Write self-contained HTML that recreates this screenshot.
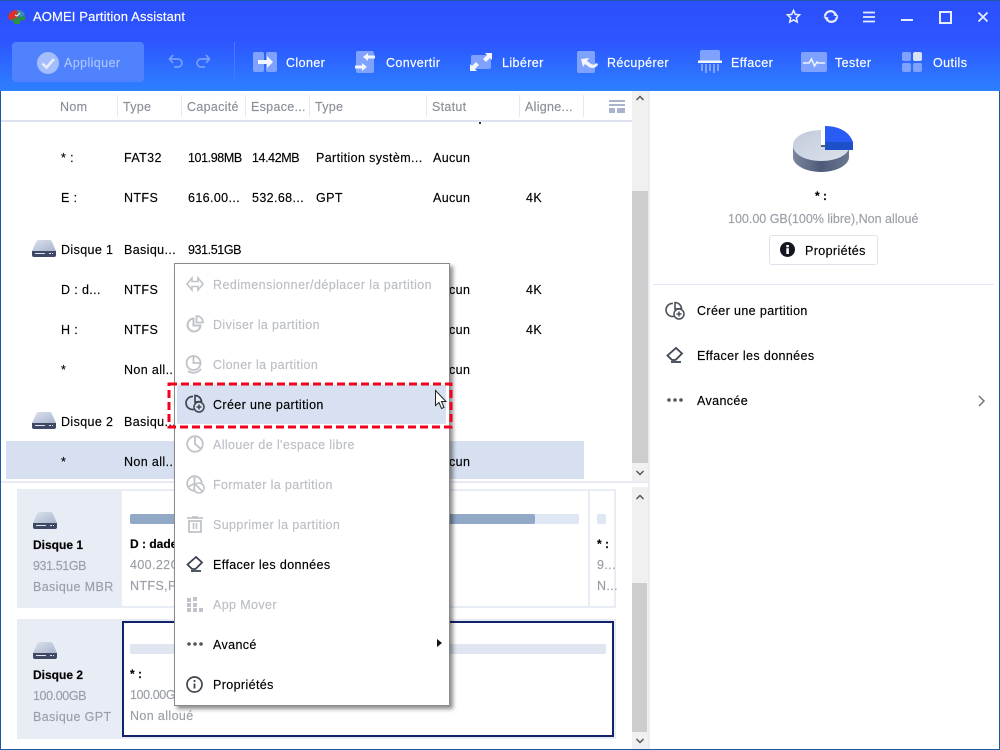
<!DOCTYPE html>
<html><head><meta charset="utf-8"><style>
html,body{margin:0;padding:0}
body{width:1000px;height:750px;position:relative;overflow:hidden;background:#fff;font-family:"Liberation Sans",sans-serif;font-size:12.5px;letter-spacing:.38px;color:#000}
.t{position:absolute;white-space:nowrap;line-height:16px;-webkit-text-stroke:.15px}
.b{position:absolute}
.h{color:#8a8f99;letter-spacing:.3px}
.g{color:#9a9ea6}
.w{color:#fff;letter-spacing:.4px}
.d{color:#bbbec4}
.n{letter-spacing:-.4px}
.m{font-weight:bold;font-size:12px;letter-spacing:0}
svg{position:absolute;overflow:visible}
</style></head><body>
<!-- header -->
<div class="b" style="left:0;top:0;width:1000px;height:91px;background:linear-gradient(#2c4ffb 0,#2d55ff 45%,#2d80ff 100%)"></div>
<div class="b" style="left:0;top:0;width:1000px;height:1px;background:#1c5aa8"></div>
<svg style="left:8px;top:9px" width="18" height="16" viewBox="0 0 18 16"><path d="M0 7C1 3 5 1 9 1l1 7-7 3H1z" fill="#d8322f"/><path d="M9 1c4 0 7 2 8 5l-4 2-3-1z" fill="#3f8fa8"/><path d="M3 11l7-3 7-1v4l-5 1v3H6v-2z" fill="#2c8f45"/><path d="M7 6l2 1 3-3" stroke="#cfe" fill="none"/></svg>
<div class="t" style="left:33px;top:9px;color:#fff;font-size:13px;letter-spacing:.13px">AOMEI Partition Assistant</div>
<!-- window controls -->
<svg style="left:786px;top:9px" width="15" height="15" viewBox="0 0 15 15"><path d="M7.500 1.500l1.800 3.900 4.200.5-3.100 2.900.8 4.200-3.700-2.100-3.700 2.100.8-4.200L1.500 5.900l4.200-.5z" fill="none" stroke="#e6ecff" stroke-width="1.600"/></svg>
<svg style="left:823px;top:9px" width="16" height="15" viewBox="0 0 16 15"><path d="M2 7.500A5.500 5.500 0 0 1 12 4.500M14 7.500A5.500 5.500 0 0 1 4 10.500" fill="none" stroke="#e6ecff" stroke-width="2.200"/><path d="M15.500 7.500L12 2.500l-1.500 4zM.5 7.500L4 12.500l1.500-4z" fill="#e6ecff"/></svg>
<svg style="left:863px;top:11px" width="13" height="12" viewBox="0 0 13 12"><path d="M0 1.500h12M0 6h12M0 10.500h12" stroke="#e6ecff" stroke-width="1.800"/></svg>
<div class="b" style="left:901px;top:19px;width:12px;height:2px;background:#e6ecff"></div>
<div class="b" style="left:939px;top:11px;width:9px;height:9px;border:2px solid #e6ecff"></div>
<svg style="left:978px;top:12px" width="10" height="10" viewBox="0 0 10 10"><path d="M.5.500l9 9M9.500.500l-9 9" stroke="#e6ecff" stroke-width="1.800"/></svg>
<!-- toolbar -->
<div class="b" style="left:12px;top:42px;width:132px;height:40px;border-radius:4px;background:#5082fd"></div>
<svg style="left:37px;top:52px" width="22" height="22" viewBox="0 0 22 22"><circle cx="11" cy="11" r="11" fill="#a3bdfd"/><path d="M5.500 11.500l4 4 7.500-8.500" fill="none" stroke="#e8eeff" stroke-width="2.600"/></svg>
<div class="t" style="left:64px;top:55px;color:#adc4fd;letter-spacing:.4px">Appliquer</div>
<svg style="left:168px;top:54px" width="44" height="14" viewBox="0 0 44 14"><path d="M2 5h8a3.500 3.500 0 0 1 0 8H6M5 1L1.500 5 5 9" fill="none" stroke="#77a0fc" stroke-width="1.700"/><path d="M41 5h-8a3.500 3.500 0 0 0 0 8h4M38 1l3.500 4L38 9" fill="none" stroke="#77a0fc" stroke-width="1.700"/></svg>
<div class="b" style="left:234px;top:42px;width:1px;height:40px;background:#4a78fa"></div>
<!-- cloner -->
<svg style="left:253px;top:52px" width="24" height="20" viewBox="0 0 24 20"><rect width="11" height="20" rx="2" fill="#7ea2fd"/><rect x="13" width="11" height="20" rx="2" fill="#7ea2fd"/><path d="M5 8h9V4l6 6-6 6v-4H5z" fill="#f2f5ff"/></svg>
<div class="t w" style="left:286px;top:55px">Cloner</div>
<!-- convertir -->
<svg style="left:355px;top:51px" width="20" height="22" viewBox="0 0 20 22"><rect x="1" width="18" height="22" rx="2" fill="#7ea2fd"/><path d="M20 4.500h-7V2L8 6l5 4V7.500h7zM0 14.500h7V12l5 4-5 4v-2.500H0z" fill="#f2f5ff"/></svg>
<div class="t w" style="left:386px;top:55px">Convertir</div>
<!-- liberer -->
<svg style="left:470px;top:53px" width="22" height="18" viewBox="0 0 22 18"><rect x="1" y="2" width="20" height="14" rx="2" fill="#7ea2fd"/><path d="M22 0v7l-2-2-4 4-3-3 4-4-2-2zM0 18v-7l2 2 4-4 3 3-4 4 2 2z" fill="#f2f5ff"/></svg>
<div class="t w" style="left:502px;top:55px">Libérer</div>
<!-- recuperer -->
<svg style="left:577px;top:51px" width="22" height="22" viewBox="0 0 22 22"><rect width="18" height="22" rx="2" fill="#7ea2fd"/><path d="M4 8l8-1-2 3 4 3c2 1 4 1 5-1l2 1c-1 4-6 5-9 3l-4-3-2 3z" fill="#f2f5ff"/></svg>
<div class="t w" style="left:607px;top:55px">Récupérer</div>
<!-- effacer -->
<svg style="left:698px;top:50px" width="24" height="23" viewBox="0 0 24 23"><path d="M2 2a2 2 0 0 1 2-2h16a2 2 0 0 1 2 2v9H2z" fill="#7ea2fd"/><path d="M3 14h2v7H3zM7 14h2v9H7zM11 14h2v7h-2zM15 14h2v9h-2zM19 14h2v7h-2z" fill="#7ea2fd"/><rect y="10.500" width="24" height="2.500" fill="#f2f5ff"/></svg>
<div class="t w" style="left:731px;top:55px">Effacer</div>
<!-- tester -->
<svg style="left:801px;top:52px" width="26" height="20" viewBox="0 0 26 20"><rect width="26" height="20" rx="2" fill="#7ea2fd"/><path d="M2 11h6l2.500-4 3 7 2.500-4 1 1h7" fill="none" stroke="#f2f5ff" stroke-width="1.500"/></svg>
<div class="t w" style="left:835px;top:55px">Tester</div>
<!-- outils -->
<svg style="left:902px;top:52px" width="20" height="20" viewBox="0 0 20 20"><rect width="9" height="9" rx="2" fill="#7ea2fd"/><rect x="11" width="9" height="9" rx="2" fill="#d8e2fb"/><rect y="11" width="9" height="9" rx="2" fill="#7ea2fd"/><rect x="11" y="11" width="9" height="9" rx="2" fill="#7ea2fd"/></svg>
<div class="t w" style="left:933px;top:55px">Outils</div>

<!-- window borders -->
<div class="b" style="left:0;top:91px;width:1px;height:659px;background:#1c5aa8"></div>
<div class="b" style="left:999px;top:91px;width:1px;height:659px;background:#1c5aa8"></div>
<div class="b" style="left:0;top:749px;width:1000px;height:1px;background:#1c5aa8"></div>

<!-- table header -->
<div class="b" style="left:1px;top:120px;width:631px;height:2px;background:#dde3ee"></div>
<div class="t h" style="left:60px;top:99px">Nom</div>
<div class="t h" style="left:123px;top:99px">Type</div>
<div class="t h" style="left:187px;top:99px">Capacité</div>
<div class="t h" style="left:251px;top:99px">Espace...</div>
<div class="t h" style="left:315px;top:99px">Type</div>
<div class="t h" style="left:432px;top:99px">Statut</div>
<div class="t h" style="left:525px;top:99px">Aligne...</div>
<div class="b" style="left:117px;top:95px;width:1px;height:22px;background:#e6e9ef"></div>
<div class="b" style="left:181px;top:95px;width:1px;height:22px;background:#e6e9ef"></div>
<div class="b" style="left:245px;top:95px;width:1px;height:22px;background:#e6e9ef"></div>
<div class="b" style="left:309px;top:95px;width:1px;height:22px;background:#e6e9ef"></div>
<div class="b" style="left:426px;top:95px;width:1px;height:22px;background:#e6e9ef"></div>
<div class="b" style="left:519px;top:95px;width:1px;height:22px;background:#e6e9ef"></div>
<div class="b" style="left:583px;top:95px;width:1px;height:22px;background:#e6e9ef"></div>
<svg style="left:609px;top:100px" width="16" height="13" viewBox="0 0 16 13"><path d="M0 0h16v2H0zM0 4h16v2H0z" fill="#a9b4cc"/><path d="M0 8h6v5H0zM8 8h8v5H8z" fill="#a9b4cc"/></svg>
<div class="b" style="left:479px;top:122px;width:2px;height:2px;background:#333"></div>

<!-- selected row -->
<div class="b" style="left:6px;top:441px;width:578px;height:38px;background:#d6e0f0"></div>

<!-- rows -->
<div class="t" style="left:61px;top:150px">* :</div><div class="t" style="left:124px;top:150px">FAT32</div><div class="t n" style="left:188px;top:150px">101.98MB</div><div class="t n" style="left:252px;top:150px">14.42MB</div><div class="t" style="left:316px;top:150px">Partition systèm...</div><div class="t" style="left:433px;top:150px">Aucun</div>
<div class="t" style="left:61px;top:190px">E :</div><div class="t" style="left:124px;top:190px">NTFS</div><div class="t" style="left:188px;top:190px">616.00...</div><div class="t" style="left:252px;top:190px">532.68...</div><div class="t" style="left:316px;top:190px">GPT</div><div class="t" style="left:433px;top:190px">Aucun</div><div class="t" style="left:526px;top:190px">4K</div>
<div class="t" style="left:61px;top:242px">Disque 1</div><div class="t" style="left:124px;top:242px">Basiqu...</div><div class="t n" style="left:188px;top:242px">931.51GB</div>
<div class="t" style="left:61px;top:282px">D : d...</div><div class="t" style="left:124px;top:282px">NTFS</div><div class="t" style="left:433px;top:282px">Aucun</div><div class="t" style="left:526px;top:282px">4K</div>
<div class="t" style="left:61px;top:322px">H :</div><div class="t" style="left:124px;top:322px">NTFS</div><div class="t" style="left:433px;top:322px">Aucun</div><div class="t" style="left:526px;top:322px">4K</div>
<div class="t" style="left:61px;top:362px">*</div><div class="t" style="left:124px;top:362px">Non all...</div><div class="t" style="left:433px;top:362px">Aucun</div>
<div class="t" style="left:61px;top:414px">Disque 2</div><div class="t" style="left:124px;top:414px">Basiqu...</div>
<div class="t" style="left:61px;top:454px">*</div><div class="t" style="left:124px;top:454px">Non all...</div><div class="t" style="left:433px;top:454px">Aucun</div>

<svg width="0" height="0" style="position:absolute"><defs>
<linearGradient id="dk" x1="0" y1="0" x2="1" y2="1"><stop offset="0" stop-color="#dbe2ee"/><stop offset="1" stop-color="#a9b5cd"/></linearGradient>
<linearGradient id="pt" x1="0" y1="0" x2="1" y2="1"><stop offset="0" stop-color="#c2cadb"/><stop offset="1" stop-color="#dde2ec"/></linearGradient>
<linearGradient id="ps" x1="0" y1="0" x2="1" y2="0"><stop offset="0" stop-color="#7a859e"/><stop offset=".5" stop-color="#4e5a78"/><stop offset="1" stop-color="#6c7791"/></linearGradient>
</defs></svg>
<svg style="left:32px;top:240px" width="24" height="17" viewBox="0 0 24 17"><path d="M4 2Q4.500 0 7 0h10q2.500 0 3 2L24 11H0z" fill="url(#dk)"/><path d="M0 11h24v4q0 2-2 2H2q-2 0-2-2z" fill="#3f4966"/><path d="M3 13h10v1H3zM17 13h2v1h-2zM20 13h1v1h-1z" fill="#dfe5f0"/></svg>
<svg style="left:32px;top:412px" width="24" height="17" viewBox="0 0 24 17"><path d="M4 2Q4.500 0 7 0h10q2.500 0 3 2L24 11H0z" fill="url(#dk)"/><path d="M0 11h24v4q0 2-2 2H2q-2 0-2-2z" fill="#3f4966"/><path d="M3 13h10v1H3zM17 13h2v1h-2zM20 13h1v1h-1z" fill="#dfe5f0"/></svg>

<!-- upper scrollbar -->
<div class="b" style="left:632px;top:91px;width:16px;height:390px;background:#f0f0f0"></div>
<div class="b" style="left:632px;top:191px;width:16px;height:272px;background:#cdcdcd"></div>
<svg style="left:636px;top:95px" width="8" height="6" viewBox="0 0 8 6"><path d="M.5 5L4 1.500 7.500 5" fill="none" stroke="#555" stroke-width="1.500"/></svg>
<svg style="left:636px;top:470px" width="8" height="6" viewBox="0 0 8 6"><path d="M.5 1L4 4.500 7.500 1" fill="none" stroke="#555" stroke-width="1.500"/></svg>
<div class="b" style="left:648px;top:91px;width:2px;height:658px;background:#e8ecf4"></div>
<div class="b" style="left:1px;top:481px;width:647px;height:2px;background:#e8ebf1"></div>

<!-- disk 1 -->
<div class="b" style="left:17px;top:489px;width:599px;height:119px;background:#e8ecf4"></div>
<div class="b" style="left:122px;top:491px;width:466px;height:115px;background:#fff"></div>
<div class="b" style="left:590px;top:491px;width:24px;height:115px;background:#fff"></div>
<svg style="left:33px;top:512px" width="24" height="17" viewBox="0 0 24 17"><path d="M4 2Q4.500 0 7 0h10q2.500 0 3 2L24 11H0z" fill="url(#dk)"/><path d="M0 11h24v4q0 2-2 2H2q-2 0-2-2z" fill="#3f4966"/><path d="M3 13h10v1H3zM17 13h2v1h-2zM20 13h1v1h-1z" fill="#dfe5f0"/></svg>
<div class="t m" style="left:33px;top:537px">Disque 1</div>
<div class="t g n" style="left:33px;top:558px">931.51GB</div>
<div class="t g" style="left:33px;top:579px">Basique MBR</div>
<div class="b" style="left:130px;top:514px;width:449px;height:10px;border-radius:2px;background:#e0e7f4"></div>
<div class="b" style="left:130px;top:514px;width:405px;height:10px;border-radius:2px;background:#91a8c6"></div>
<div class="t m" style="left:130px;top:536px">D : dade</div>
<div class="t g" style="left:130px;top:557px">400.22G</div>
<div class="t g" style="left:130px;top:578px">NTFS,Pr</div>
<div class="b" style="left:597px;top:514px;width:9px;height:10px;border-radius:2px;background:#e0e7f4"></div>
<div class="t m" style="left:597px;top:536px">* :</div>
<div class="t g" style="left:597px;top:557px">9...</div>
<div class="t g" style="left:597px;top:578px">N...</div>

<!-- disk 2 -->
<div class="b" style="left:17px;top:619px;width:599px;height:120px;background:#e8ecf4"></div>
<div class="b" style="left:122px;top:621px;width:488px;height:112px;background:#fff;border:2px solid #12236b"></div>
<svg style="left:33px;top:642px" width="24" height="17" viewBox="0 0 24 17"><path d="M4 2Q4.500 0 7 0h10q2.500 0 3 2L24 11H0z" fill="url(#dk)"/><path d="M0 11h24v4q0 2-2 2H2q-2 0-2-2z" fill="#3f4966"/><path d="M3 13h10v1H3zM17 13h2v1h-2zM20 13h1v1h-1z" fill="#dfe5f0"/></svg>
<div class="t m" style="left:33px;top:667px">Disque 2</div>
<div class="t g n" style="left:33px;top:688px">100.00GB</div>
<div class="t g" style="left:33px;top:709px">Basique GPT</div>
<div class="b" style="left:130px;top:644px;width:476px;height:10px;border-radius:2px;background:#dfe6f2"></div>
<div class="t m" style="left:130px;top:666px">* :</div>
<div class="t g n" style="left:130px;top:687px">100.00GB</div>
<div class="t g" style="left:130px;top:708px">Non alloué</div>

<!-- lower scrollbar -->
<div class="b" style="left:632px;top:487px;width:16px;height:262px;background:#f0f0f0"></div>
<div class="b" style="left:632px;top:583px;width:15px;height:149px;background:#cdcdcd"></div>
<svg style="left:636px;top:494px" width="8" height="6" viewBox="0 0 8 6"><path d="M.5 5L4 1.500 7.500 5" fill="none" stroke="#555" stroke-width="1.500"/></svg>
<svg style="left:636px;top:738px" width="8" height="6" viewBox="0 0 8 6"><path d="M.5 1L4 4.500 7.500 1" fill="none" stroke="#555" stroke-width="1.500"/></svg>

<!-- right panel -->
<svg style="left:790px;top:126px" width="66" height="50" viewBox="0 0 66 50">
<path d="M3 19v12c0 8 12.500 15 28 15s28-7 28-15V19z" fill="url(#ps)"/>
<path d="M31 4C15 4 3 11 3 19.500S15 35 31 35s28-6.500 28-14H31z" fill="url(#pt)"/>
<path d="M35 0c13 0 24 5 28 16H35z" fill="#2a5bf5"/>
<path d="M35 16h28v8H35z" fill="#1d4fc8"/>
</svg>
<div class="t m" style="left:815px;top:188px">* :</div>
<div class="t g" style="left:728px;top:211px;letter-spacing:0">100.00 GB(100% libre),Non alloué</div>
<div class="b" style="left:769px;top:235px;width:107px;height:28px;border:1px solid #dfe3ec;border-radius:3px;background:#fff"></div>
<svg style="left:780px;top:242px" width="15" height="15" viewBox="0 0 15 15"><circle cx="7.500" cy="7.500" r="7.500" fill="#14171f"/><rect x="6.300" y="6.200" width="2.600" height="5.800" fill="#fff"/><rect x="6.300" y="3" width="2.600" height="2.300" fill="#fff"/></svg>
<div class="t" style="left:805px;top:243px">Propriétés</div>
<div class="b" style="left:653px;top:284px;width:341px;height:1px;background:#e2e7f1"></div>

<svg style="left:666px;top:301px" width="19" height="19" viewBox="0 0 19 19"><path d="M7 2.500a6.500 6.500 0 1 0 2 12.500M9 1.500a6.500 6.500 0 0 1 6.500 6L9 8z" fill="none" stroke="#4a4f5a" stroke-width="1.600"/><circle cx="13" cy="13" r="5" fill="#fff" stroke="#4a4f5a" stroke-width="1.500"/><path d="M10.500 13h5M13 10.500v5" stroke="#4a4f5a" stroke-width="1.500"/></svg>
<div class="t" style="left:697px;top:303px">Créer une partition</div>
<svg style="left:666px;top:347px" width="18" height="16" viewBox="0 0 18 16"><path d="M1.500 8.500L10 1l6 5.500-6.500 6.500H6z" fill="none" stroke="#3f4550" stroke-width="1.800"/><path d="M5 15h10" stroke="#3f4550" stroke-width="1.800"/></svg>
<div class="t" style="left:697px;top:348px">Effacer les données</div>
<svg style="left:667px;top:398px" width="16" height="4" viewBox="0 0 16 4"><circle cx="2" cy="2" r="1.800" fill="#555"/><circle cx="8" cy="2" r="1.800" fill="#555"/><circle cx="14" cy="2" r="1.800" fill="#555"/></svg>
<div class="t" style="left:697px;top:393px">Avancée</div>
<svg style="left:978px;top:395px" width="7" height="12" viewBox="0 0 7 12"><path d="M1 1l5 5-5 5" fill="none" stroke="#777" stroke-width="1.500"/></svg>

<!-- context menu -->
<div class="b" style="left:174px;top:263px;width:274px;height:441px;background:#fff;border:1px solid #8a8a8a;box-shadow:3px 3px 4px rgba(0,0,0,.45)"></div>
<div class="b" style="left:177px;top:385px;width:269px;height:39px;border-radius:2px;background:#d8e1f1"></div>
<div class="t d" style="left:213px;top:277px;letter-spacing:.43px">Redimensionner/déplacer la partition</div>
<div class="t d" style="left:213px;top:317px">Diviser la partition</div>
<div class="t d" style="left:213px;top:357px">Cloner la partition</div>
<div class="t" style="left:213px;top:397px">Créer une partition</div>
<div class="t d" style="left:213px;top:437px">Allouer de l'espace libre</div>
<div class="t d" style="left:213px;top:477px">Formater la partition</div>
<div class="t d" style="left:213px;top:517px">Supprimer la partition</div>
<div class="t" style="left:213px;top:557px">Effacer les données</div>
<div class="t d" style="left:213px;top:597px">App Mover</div>
<div class="t" style="left:213px;top:637px">Avancé</div>
<div class="t" style="left:213px;top:677px">Propriétés</div>

<svg style="left:186px;top:277px" width="18" height="14" viewBox="0 0 18 14"><path d="M6 1L1 7l5 6V9.500h6V13l5-6-5-6v3.500H6z" fill="none" stroke="#c0c3c9" stroke-width="1.600"/></svg>
<svg style="left:186px;top:315px" width="18" height="18" viewBox="0 0 18 18"><path d="M7.500 3.500a6.500 6.500 0 1 0 7 7H7.500z" fill="none" stroke="#c0c3c9" stroke-width="2"/><path d="M10.500 1a6.500 6.500 0 0 1 6.500 6.500h-6.500z" fill="none" stroke="#c0c3c9" stroke-width="1.800"/></svg>
<svg style="left:185px;top:355px" width="19" height="19" viewBox="0 0 19 19"><circle cx="8.500" cy="8" r="7" fill="none" stroke="#c0c3c9" stroke-width="1.800"/><path d="M8.500 1v7h7" fill="none" stroke="#c0c3c9" stroke-width="1.800"/><path d="M3 16c4 3 10 2 13-2" fill="none" stroke="#c0c3c9" stroke-width="1.800"/></svg>
<svg style="left:186px;top:394px" width="19" height="19" viewBox="0 0 19 19"><path d="M7 2.500a6.500 6.500 0 1 0 2 12.500M9 1.500a6.500 6.500 0 0 1 6.500 6L9 8z" fill="none" stroke="#3f4550" stroke-width="1.700"/><circle cx="13" cy="13" r="5" fill="#d8e1f1" stroke="#3f4550" stroke-width="1.500"/><path d="M10.500 13h5M13 10.500v5" stroke="#3f4550" stroke-width="1.500"/></svg>
<svg style="left:186px;top:435px" width="18" height="18" viewBox="0 0 18 18"><circle cx="9" cy="9" r="7.800" fill="none" stroke="#c0c3c9" stroke-width="1.800"/><path d="M9 1v8l6 5" fill="none" stroke="#c0c3c9" stroke-width="1.800"/></svg>
<svg style="left:186px;top:475px" width="19" height="19" viewBox="0 0 19 19"><circle cx="8.500" cy="8.500" r="7.300" fill="none" stroke="#c0c3c9" stroke-width="1.800"/><path d="M8.500 1v7.500L2 12" fill="none" stroke="#c0c3c9" stroke-width="1.800"/><circle cx="13" cy="13" r="5" fill="#fff" stroke="#c0c3c9" stroke-width="1.600"/><path d="M9.500 9.500l7 7" stroke="#c0c3c9" stroke-width="1.600"/></svg>
<svg style="left:187px;top:516px" width="16" height="17" viewBox="0 0 16 17"><path d="M0 2h16M5 1h6" stroke="#c0c3c9" stroke-width="1.800"/><path d="M2 5v11h12V5z" fill="none" stroke="#c0c3c9" stroke-width="1.800"/><path d="M6.500 7v6M9.500 7v6" stroke="#c0c3c9" stroke-width="1.600"/></svg>
<svg style="left:186px;top:556px" width="18" height="16" viewBox="0 0 18 16"><path d="M1.500 8.500L10 1l6 5.500-6.500 6.500H6z" fill="none" stroke="#3f4550" stroke-width="1.800"/><path d="M5 15h10" stroke="#3f4550" stroke-width="1.800"/></svg>
<svg style="left:187px;top:597px" width="16" height="15" viewBox="0 0 16 15"><path d="M0 1h4v4H0zM6 0h4v4H6zM0 6h4v4H0zM6 6h4v4H6zM0 11h4v4H0zM6 11h4v4H6zM12 11h4v4h-4z" fill="#c0c3c9"/></svg>
<svg style="left:187px;top:642px" width="16" height="4" viewBox="0 0 16 4"><circle cx="2" cy="2" r="1.800" fill="#555"/><circle cx="8" cy="2" r="1.800" fill="#555"/><circle cx="14" cy="2" r="1.800" fill="#555"/></svg>
<svg style="left:437px;top:639px" width="5" height="8" viewBox="0 0 5 8"><path d="M0 0l5 4-5 4z" fill="#111"/></svg>
<svg style="left:186px;top:676px" width="17" height="17" viewBox="0 0 17 17"><circle cx="8.500" cy="8.500" r="7.500" fill="none" stroke="#3f4550" stroke-width="1.700"/><path d="M8.500 7.500v5M8.500 4v2" stroke="#3f4550" stroke-width="1.800"/></svg>

<!-- cursor -->
<svg style="left:435px;top:390px" width="12" height="20" viewBox="0 0 12 20"><path d="M.5.500v15l3.500-3 2.500 6 2.500-1-2.500-6h4.500z" fill="#fff" stroke="#222" stroke-width="1"/></svg>

<!-- red dashed -->
<svg style="left:167px;top:382px" width="286" height="47" viewBox="0 0 286 47"><rect x="2" y="2" width="282" height="43" fill="none" stroke="#f2001c" stroke-width="3" stroke-dasharray="8 4"/></svg>
</body></html>
